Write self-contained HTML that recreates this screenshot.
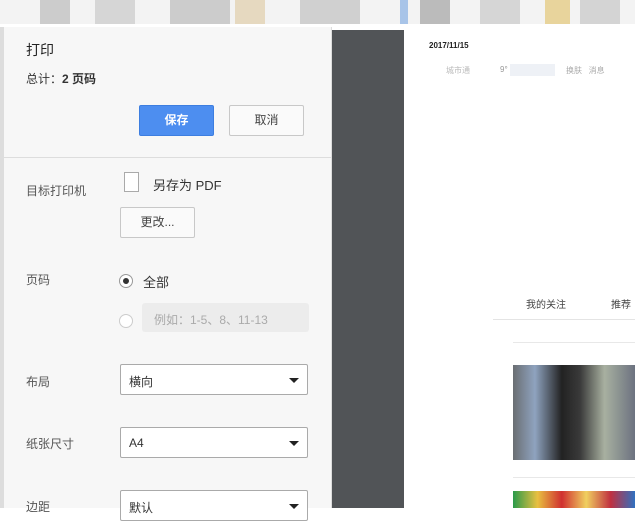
<!DOCTYPE html>
<html><head><meta charset="utf-8"><style>
*{margin:0;padding:0;box-sizing:border-box}
body{width:635px;height:508px;overflow:hidden;position:relative;background:#fff;font-family:"Liberation Sans","Noto Sans CJK SC",sans-serif;color:#333}
.a{position:absolute}
.blk{position:absolute;top:0;height:24px}
.lbl{position:absolute;left:26px;font-size:12px;color:#555}
.btn{position:absolute;border:1px solid #c8c8c8;border-radius:2px;background:#fafafa;font-size:12px;text-align:center;color:#444}
.sel{position:absolute;left:120px;width:188px;height:31px;border:1px solid #aaa;border-radius:2px;background:#fff;font-size:12px;padding:8px 0 0 8px;color:#333}
.sel:after{content:"";position:absolute;right:8px;top:13px;border-left:5px solid transparent;border-right:5px solid transparent;border-top:5px solid #222}
</style></head><body>
<div class="blk" style="left:0;width:635px;background:#f3f3f3"></div>
<div class="blk" style="left:40px;width:30px;background:#ccc"></div>
<div class="blk" style="left:95px;width:40px;background:#d6d6d6"></div>
<div class="blk" style="left:170px;width:60px;background:#ccc"></div>
<div class="blk" style="left:235px;width:30px;background:#e6d9c0"></div>
<div class="blk" style="left:300px;width:60px;background:#d0d0d0"></div>
<div class="blk" style="left:400px;width:8px;background:#a8c4e8"></div>
<div class="blk" style="left:420px;width:30px;background:#bbb"></div>
<div class="blk" style="left:480px;width:40px;background:#d6d6d6"></div>
<div class="blk" style="left:545px;width:25px;background:#e8d49c"></div>
<div class="blk" style="left:580px;width:40px;background:#d4d4d4"></div>
<div class="a" style="left:0;top:27px;width:332px;height:481px;background:#f7f7f7;border-left:4px solid #ddd;border-right:1px solid #ddd"></div>
<div class="a" style="left:26px;top:40px;font-size:14px;color:#222">打印</div>
<div class="a" style="left:26px;top:70px;font-size:12px;color:#333">总计：<b>2 页码</b></div>
<div class="btn" style="left:139px;top:105px;width:75px;height:31px;background:#4d8ef0;border-color:#3d7ee0;color:#fff;line-height:29px;font-weight:bold">保存</div>
<div class="btn" style="left:229px;top:105px;width:75px;height:31px;line-height:29px">取消</div>
<div class="a" style="left:4px;top:157px;width:327px;height:1px;background:#ddd"></div>
<div class="lbl" style="top:182px">目标打印机</div>
<div class="a" style="left:124px;top:172px;width:15px;height:20px;border:1px solid #aaa;background:#fff"></div>
<div class="a" style="left:153px;top:175px;font-size:13px;color:#333">另存为 PDF</div>
<div class="btn" style="left:120px;top:207px;width:75px;height:31px;line-height:29px">更改...</div>
<div class="lbl" style="top:271px">页码</div>
<div class="a" style="left:119px;top:274px;width:14px;height:14px;border:1px solid #999;border-radius:50%;background:#fff"><div style="margin:3px;width:6px;height:6px;border-radius:50%;background:#333"></div></div>
<div class="a" style="left:143px;top:272px;font-size:13px">全部</div>
<div class="a" style="left:119px;top:314px;width:14px;height:14px;border:1px solid #ccc;border-radius:50%;background:#fff"></div>
<div class="a" style="left:142px;top:303px;width:167px;height:29px;background:#ececec;border-radius:3px;font-size:12px;color:#aaa;padding:8px 0 0 12px">例如：1-5、8、11-13</div>
<div class="lbl" style="top:373px">布局</div>
<div class="sel" style="top:364px">横向</div>
<div class="lbl" style="top:435px">纸张尺寸</div>
<div class="sel" style="top:427px">A4</div>
<div class="lbl" style="top:498px">边距</div>
<div class="sel" style="top:490px">默认</div>
<div class="a" style="left:332px;top:30px;width:72px;height:478px;background:#515457"></div>
<div class="a" style="left:404px;top:30px;width:231px;height:478px;background:#fff"></div>
<div class="a" style="left:429px;top:41px;font-size:8px;color:#222;font-weight:bold">2017/11/15</div>
<div class="a" style="left:446px;top:65px;font-size:8px;color:#bbb">城市通</div>
<div class="a" style="left:500px;top:65px;font-size:8px;color:#999">9°</div>
<div class="a" style="left:510px;top:64px;width:45px;height:12px;background:#eef1f6"></div>
<div class="a" style="left:566px;top:65px;font-size:8px;color:#aaa">换肤 &nbsp; 消息</div>
<div class="a" style="left:526px;top:296px;font-size:10px;color:#444">我的关注</div>
<div class="a" style="left:611px;top:296px;font-size:10px;color:#444">推荐</div>
<div class="a" style="left:493px;top:319px;width:142px;height:1px;background:#e4e4e4"></div>
<div class="a" style="left:513px;top:342px;width:122px;height:1px;background:#e8e8e8"></div>
<div class="a" style="left:513px;top:365px;width:122px;height:95px;background:linear-gradient(90deg,#6a6e72 0%,#8fa3bf 18%,#222 40%,#3a3a3a 55%,#a8b0a0 75%,#6c7280 100%)"></div>
<div class="a" style="left:513px;top:477px;width:122px;height:1px;background:#e8e8e8"></div>
<div class="a" style="left:513px;top:491px;width:122px;height:17px;background:linear-gradient(90deg,#2a9a4a,#e8c040 20%,#d03030 40%,#f0d060 60%,#c03040 80%,#3070c0)"></div>
</body></html>
